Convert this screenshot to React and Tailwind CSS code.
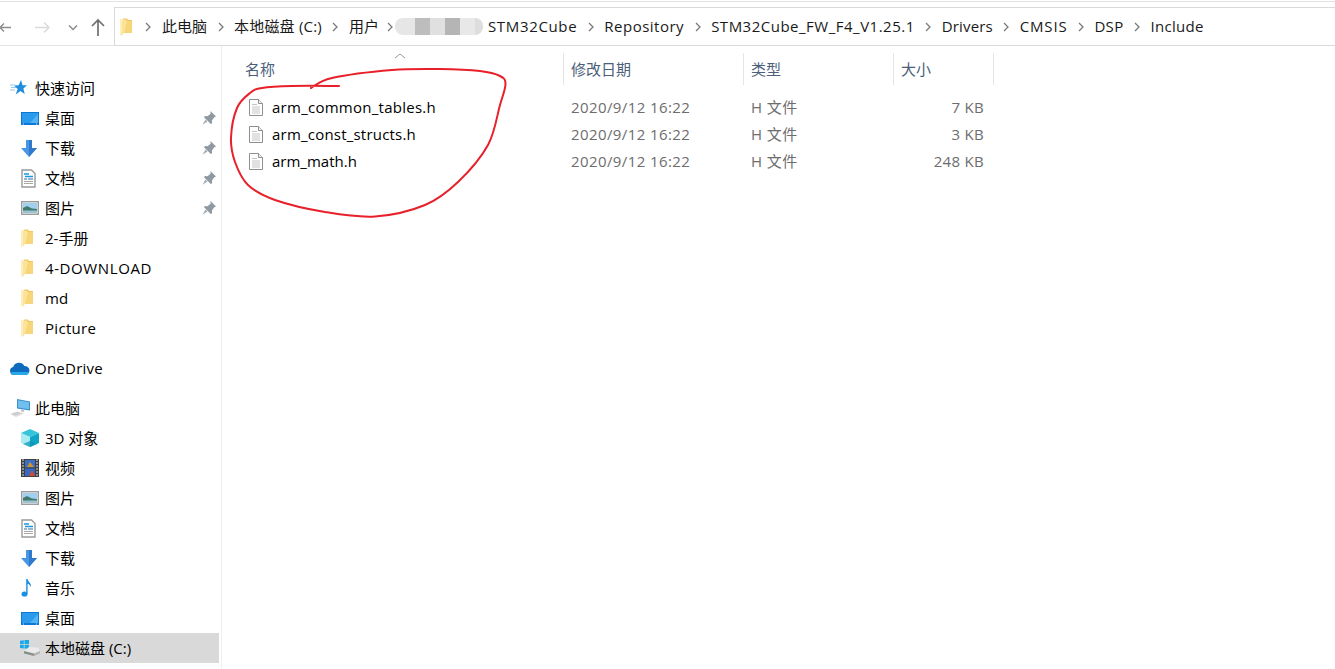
const font = { fontFamily: '"Open Sans", "Noto Sans CJK SC", sans-serif' }

function Folder({ className = 'w-3 h-[18px]' }) {
  return (
    <svg viewBox="0 0 12 18" className={className}>
      <path d="M3 0.500h4l1 1.500h4v13H3z" fill="#f1c65e" />
      <path d="M0 1.500h5.500l1.500 1.500v11.500l-3.500.5-.5 2-3 .5z" fill="#fbe49a" />
      <path d="M0 1.500h2v15.500l-2 .5z" fill="#fdeebc" />
      <path d="M7 3h5v12H4z" fill="#f7d67a" />
    </svg>
  )
}

function Pin() {
  return (
    <svg viewBox="0 0 14 14" className="w-[14px] h-[14px]">
      <path d="M8.500 0l5.500 5.500-1.700.7-2.400 3.300.2 2.700-1.300.8L2 6.200l.9-1.200 2.600.2 3.100-2.500z" fill="#8e99a2" />
      <path d="M3.500 8.500l2 2L.5 13.700z" fill="#a4adb4" />
    </svg>
  )
}

function Desktop() {
  return (
    <svg viewBox="0 0 18 13" className="w-[18px] h-[13px]">
      <rect width="18" height="13" fill="#0a78d4" />
      <path d="M1 1h16v10H1z" fill="#2a9bec" />
      <path d="M9 11l8-9v9z" fill="#52b4f5" />
      <path d="M2 12h1M15 12h1" stroke="#fff" strokeWidth=".8" />
    </svg>
  )
}

function Download() {
  return (
    <svg viewBox="0 0 16 17" className="w-4 h-[17px]">
      <path d="M5 0h6v8h5l-8 9-8-9h5z" fill="#4896e6" />
      <path d="M8 0h3v8h5l-8 9z" fill="#3079cc" />
    </svg>
  )
}

function Doc() {
  return (
    <svg viewBox="0 0 15 19" className="w-[15px] h-[19px]">
      <path d="M1 1h9.500l3.500 3.500V18H1z" fill="#fff" stroke="#9a9a9a" strokeWidth="1.400" />
      <path d="M3 5h5M4 7.500h8" stroke="#1f94e0" strokeWidth="1.300" />
      <path d="M3 10h3M7 10h5" stroke="#2a6f9e" strokeWidth="1.100" />
      <path d="M3 12.500h9M3 14.500h9" stroke="#a9a9a9" />
    </svg>
  )
}

function Picture() {
  return (
    <svg viewBox="0 0 18 14" className="w-[18px] h-[14px]">
      <rect x=".7" y=".7" width="16.600" height="12.600" fill="#f4f4f4" stroke="#9c9c9c" strokeWidth="1.400" />
      <rect x="2" y="2" width="14" height="10" fill="#9fd0f0" />
      <path d="M2 7l4-2 5 2.500 5 .5v4H2z" fill="#3f7a6c" />
      <path d="M2 9.500h14V12H2z" fill="#9cc3d2" />
    </svg>
  )
}

function Cube() {
  return (
    <svg viewBox="0 0 18 18" className="w-[18px] h-[18px]">
      <path d="M9 0l9 4-9 4-9-4z" fill="#35c4da" />
      <path d="M0 4l9 4v10l-9-4z" fill="#a8ebf0" />
      <path d="M18 4L9 8v10l9-4z" fill="#0fa5c6" />
      <path d="M2 14.900L9 12l7 2.900L9 18z" fill="#0a93b4" opacity=".7" />
    </svg>
  )
}

function Video() {
  return (
    <svg viewBox="0 0 18 18" className="w-[18px] h-[18px]">
      <rect width="18" height="18" fill="#3f3f3f" />
      <path d="M1 1h2M1 4h2M1 7h2M1 10h2M1 13h2M1 16h2M15 1h2M15 4h2M15 7h2M15 10h2M15 13h2M15 16h2" stroke="#dcdcdc" strokeWidth="1.200" />
      <rect x="4" y="1" width="10" height="7.500" fill="#3a6fc8" />
      <path d="M6 8l3-5 4 5z" fill="#d0942c" />
      <rect x="4" y="9.500" width="10" height="7.500" fill="#3569c4" />
      <path d="M8 17l3-6 3 6z" fill="#cf4a2e" />
    </svg>
  )
}

function Music() {
  return (
    <svg viewBox="0 0 12 18" className="w-3 h-[18px]">
      <ellipse cx="3.500" cy="15" rx="3" ry="2.600" fill="#1a8fe3" />
      <path d="M5.200 0h1.400c.4 3 4 4 3.400 8-.8-2-2.600-3-3.400-3.200V15H5.200z" fill="#1a8fe3" />
    </svg>
  )
}

function Star() {
  return (
    <svg viewBox="0 0 17 16" className="w-[17px] h-4">
      <path d="M11 0l1.600 5.200H17l-3.600 3.200 1.300 5.600-4.200-3-4.800 3.500 2-5.600L4 5.500l4.700-.3z" fill="#1f8ce0" />
      <path d="M0 5h5M1 7.500h5M0 10h5" stroke="#93c9ee" />
    </svg>
  )
}

function Cloud() {
  return (
    <svg viewBox="0 0 20 13" className="w-5 h-[13px]">
      <path d="M4 13a4 4 0 0 1-.8-7.900A6 6 0 0 1 14.300 4 4.500 4.500 0 0 1 15.500 13z" fill="#0f6cbd" />
      <path d="M4 13a3 3 0 0 1-3-3h18a3.500 3.500 0 0 1-3.500 3z" fill="#28a8ea" />
    </svg>
  )
}

function Computer() {
  return (
    <svg viewBox="0 0 20 18" className="w-5 h-[18px]">
      <path d="M7 0l13 2.500v9L7 9.500z" fill="#3a8ecc" />
      <path d="M8 1.200l11 2.100v7L8 8.600z" fill="#6fc0ee" />
      <path d="M11 10.500l3 .5v2l-3-.5z" fill="#b9c4cc" />
      <path d="M0 15l8-2.500 6 2-8 3.500z" fill="#dcdcdc" />
      <path d="M2 15l6-2M4 16l6-2" stroke="#bcbcbc" strokeWidth=".7" />
    </svg>
  )
}

function Drive() {
  return (
    <svg viewBox="0 0 20 16" className="w-5 h-4 -ml-[1px]">
      <path d="M0 .800l3.800-.6V4H0zM4.500 0L9 -.6V4H4.500zM0 4.800h3.800v3.700L0 8zM4.500 4.800H9v4.300l-4.500-.6z" fill="#19a8ea" />
      <path d="M4 11l5-4 9 .5 2 3.500-6 3z" fill="#eaeaea" />
      <path d="M4 11l10 2.500V16L4 13.500z" fill="#8e8e8e" />
      <path d="M14 13.500l6-2.500v2.500L14 16z" fill="#b4b4b4" />
      <path d="M5.500 12.500l1.500.4" stroke="#37b24d" strokeWidth="1" />
    </svg>
  )
}

function FileIcon() {
  return (
    <svg viewBox="0 0 14 17" className="w-[14px] h-[17px]">
      <path d="M.5.500h9l4 4v12H.5z" fill="#fff" stroke="#8f8f8f" />
      <path d="M9.500.500v4h4" fill="#eee" stroke="#8f8f8f" />
      <path d="M3 5.500h5M3 8h8M3 10h8M3 12h8M3 14h8" stroke="#c4c4c4" />
    </svg>
  )
}

function Chevron() {
  return (
    <svg viewBox="0 0 6 10" className="w-[6px] h-[10px]">
      <path d="M1 1l4 4-4 4" fill="none" stroke="#7a7a7a" strokeWidth="1.300" />
    </svg>
  )
}

function Crumb() {
  return (
    <span className="w-[27px] flex justify-center">
      <Chevron />
    </span>
  )
}

const quick = [
  [<Desktop />, '桌面', true],
  [<Download />, '下载', true],
  [<Doc />, '文档', true],
  [<Picture />, '图片', true],
  [<Folder />, '2-手册'],
  [<Folder />, '4-DOWNLOAD', false, 'tracking-[0.6px]'],
  [<Folder />, 'md'],
  [<Folder />, 'Picture', false, 'tracking-[0.3px]'],
]

const drives = [
  [<Cube />, '3D 对象'],
  [<Video />, '视频'],
  [<Picture />, '图片'],
  [<Doc />, '文档'],
  [<Download />, '下载'],
  [<Music />, '音乐'],
  [<Desktop />, '桌面'],
]

const files = [
  ['arm_common_tables.h', '7 KB', 'tracking-[0.26px]'],
  ['arm_const_structs.h', '3 KB', 'tracking-[0.21px]'],
  ['arm_math.h', '248 KB', ''],
]

function TopRow({ icon, label, className = '' }) {
  return (
    <div className="h-[30px] flex items-center text-black">
      <span className="w-[35px] pl-[10px] flex items-center">{icon}</span>
      <span className={className}>{label}</span>
    </div>
  )
}

function NavRow({ icon, label, pinned, active, className = '' }) {
  return (
    <div className={`h-[30px] flex items-center text-black ${active ? 'bg-[#d9d9d9]' : ''}`}>
      <span className="w-[45px] pl-[21px] flex items-center">{icon}</span>
      <span className={`flex-1 ${className}`}>{label}</span>
      {pinned && <span className="pr-[3px] flex"><Pin /></span>}
    </div>
  )
}

// freehand circle, curve goes through every point
const circle = [[339, 86], [292, 86], [262, 88], [250, 93], [237, 108], [231, 138], [235, 162], [248, 185], [275, 200], [325, 212], [375, 216.500], [425, 205], [458, 182], [488, 145], [500, 105], [505.500, 84], [500, 76], [480, 71], [440, 69], [392, 70], [332, 78], [311, 88]]

function smooth(pts) {
  let d = `M${pts[0][0]} ${pts[0][1]}`
  for (let i = 0; i < pts.length - 1; i++) {
    const p0 = pts[i - 1] || pts[i]
    const p1 = pts[i]
    const p2 = pts[i + 1]
    const p3 = pts[i + 2] || p2
    const c1x = p1[0] + (p2[0] - p0[0]) / 6
    const c1y = p1[1] + (p2[1] - p0[1]) / 6
    const c2x = p2[0] - (p3[0] - p1[0]) / 6
    const c2y = p2[1] - (p3[1] - p1[1]) / 6
    d += ` C${c1x} ${c1y} ${c2x} ${c2y} ${p2[0]} ${p2[1]}`
  }
  return d
}

export default function App() {
  return (
    <div style={font} className="relative w-[1335px] h-[669px] overflow-hidden bg-white text-[15px] leading-none">
      <div className="h-[46px] pt-[1px] border-b border-[#e3e3e3]">
        <div className="h-[1px] bg-[#e3e3e3]" />
        <div className="flex mt-[5px] h-[39px]">
          <div className="w-[114px] flex items-center">
            <svg viewBox="0 0 114 20" className="w-[114px] h-5">
              <path d="M-2 10.500h13M0 10.500l4-4M0 10.500l4 4" fill="none" stroke="#8c8c8c" strokeWidth="1.400" />
              <path d="M35 10.500h14M44 5.500l5 5-5 5" fill="none" stroke="#dadada" strokeWidth="1.400" />
              <path d="M69 8.500l4 4 4-4" fill="none" stroke="#8c8c8c" strokeWidth="1.500" />
              <path d="M98 19V3M92 9l6-6 6 6" fill="none" stroke="#6f6f6f" strokeWidth="1.700" />
            </svg>
          </div>
          <div className="flex-1 border border-r-0 border-[#d9d9d9] flex items-center pl-[5px] text-[#1a1a1a]">
            <Folder />
            <span className="w-[30px] flex justify-end pr-[11px]">
              <Chevron />
            </span>
            <span>此电脑</span>
            <Crumb />
            <span className="tracking-[0.2px]">本地磁盘 (C:)</span>
            <Crumb />
            <span>用户</span>
            <span className="w-[16px] flex justify-center pl-[6px]"><Chevron /></span>
            <span className="flex h-[17px] w-[88px] rounded-lg overflow-hidden">
              <span className="w-[20px] bg-[#e6e6e6]" />
              <span className="w-[15px] bg-[#bdbdbd]" />
              <span className="w-[15px] bg-[#e0e0e0]" />
              <span className="w-[15px] bg-[#b5b5b5]" />
              <span className="w-[15px] bg-[#e8e8e8]" />
              <span className="w-[8px] bg-[#dddddd]" />
            </span>
            <span className="ml-[5px] tracking-[0.66px]">STM32Cube</span>
            <Crumb />
            <span className="tracking-[0.5px]">Repository</span>
            <Crumb />
            <span className="tracking-[0.5px]">STM32Cube_FW_F4_V1.25.1</span>
            <Crumb />
            <span className="tracking-[0.15px]">Drivers</span>
            <Crumb />
            <span className="tracking-[0.8px]">CMSIS</span>
            <Crumb />
            <span className="tracking-[0.3px]">DSP</span>
            <Crumb />
            <span className="tracking-[0.3px]">Include</span>
          </div>
        </div>
      </div>

      <div className="flex">
        <div className="w-[222px] pr-[2px] pt-[27px] border-r border-[#efefef] h-[623px]">
          <TopRow icon={<Star />} label="快速访问" />
          {quick.map(([icon, label, pinned, cls], i) => (
            <NavRow key={i} icon={icon} label={label} pinned={pinned} className={cls} />
          ))}
          <div className="mt-[10px]">
            <TopRow icon={<Cloud />} label="OneDrive" className="tracking-[0.25px]" />
          </div>
          <div className="mt-[10px]">
            <TopRow icon={<Computer />} label="此电脑" />
          </div>
          {drives.map(([icon, label], i) => (
            <NavRow key={i} icon={icon} label={label} />
          ))}
          <NavRow icon={<Drive />} label="本地磁盘 (C:)" active />
        </div>

        <div className="flex-1 relative">
          <svg viewBox="0 0 10 6" className="absolute left-[173px] top-[7px] w-[10px] h-[6px]">
            <path d="M0 5l5-4 5 4" fill="none" stroke="#9a9a9a" />
          </svg>
          <div className="flex mt-[7px] h-[32px] text-[#4c607a]">
            <div className="w-[341px] pl-[23px] flex items-center">名称</div>
            <div className="w-[180px] pl-[7px] flex items-center border-l border-[#e5e5e5]">修改日期</div>
            <div className="w-[150px] pl-[7px] flex items-center border-l border-[#e5e5e5]">类型</div>
            <div className="w-[101px] pl-[7px] flex items-center border-x border-[#e5e5e5]">大小</div>
          </div>
          <div className="mt-[9px]">
            {files.map(([name, size, cls]) => (
              <div key={name} className="flex h-[27px] items-center text-[#6d6d6d]">
                <div className="w-[341px] pl-[27px] flex items-center gap-[9px] text-black">
                  <FileIcon />
                  <span className={cls}>{name}</span>
                </div>
                <div className="w-[180px] pl-[8px] tracking-[0.4px]">2020/9/12 16:22</div>
                <div className="w-[150px] pl-[8px] tracking-[0.4px]">H 文件</div>
                <div className="w-[91px] text-right tracking-[0.3px]">{size}</div>
              </div>
            ))}
          </div>
        </div>
      </div>

      <svg viewBox="0 0 1335 669" className="absolute inset-0 w-[1335px] h-[669px] pointer-events-none">
        <path d={smooth(circle)} fill="none" stroke="#e8202a" strokeWidth="2" strokeLinecap="round" />
      </svg>
    </div>
  )
}
